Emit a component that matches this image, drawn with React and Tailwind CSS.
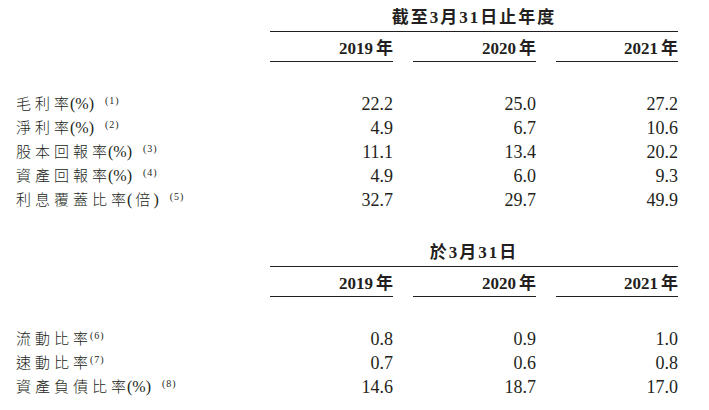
import React from "react";

const sectionOne = [
  { label: "毛利率", unit: "(%)", note: "(1)", values: ["22.2", "25.0", "27.2"] },
  { label: "淨利率", unit: "(%)", note: "(2)", values: ["4.9", "6.7", "10.6"] },
  { label: "股本回報率", unit: "(%)", note: "(3)", values: ["11.1", "13.4", "20.2"] },
  { label: "資產回報率", unit: "(%)", note: "(4)", values: ["4.9", "6.0", "9.3"] },
  { label: "利息覆蓋比率", unit: "(倍)", note: "(5)", values: ["32.7", "29.7", "49.9"] },
];

const sectionTwo = [
  { label: "流動比率", unit: "", note: "(6)", values: ["0.8", "0.9", "1.0"] },
  { label: "速動比率", unit: "", note: "(7)", values: ["0.7", "0.6", "0.8"] },
  { label: "資產負債比率", unit: "(%)", note: "(8)", values: ["14.6", "18.7", "17.0"] },
];

const years = ["2019", "2020", "2021"];

function Section({ title, rows, gap }) {
  return (
    <div className="grid grid-cols-[234px_123px_123px_122px] gap-x-5">
      {/* Title over the three year columns */}
      <div className="col-start-2 col-span-3 h-[32px] pt-[8px] text-center text-[17px] leading-[20px] font-bold tracking-[2px] border-b border-[#231f20]">
        {title}
      </div>

      {/* Year headings */}
      <div />
      {years.map((y) => (
        <div
          key={y}
          className="h-[30px] pt-[5px] text-right text-[17px] leading-[24px] font-bold border-b border-[#231f20]"
        >
          {y}
          <span className="ml-[3px]">年</span>
        </div>
      ))}

      {/* Data rows */}
      {rows.map((r, i) => (
        <React.Fragment key={r.label}>
          <div className={`${i === 0 ? gap : ""} h-[24px] leading-[24px] flex items-center whitespace-nowrap`}>
            <span className="text-[15px] font-light">
              <span className="tracking-[4px]">{r.label.slice(0, -1)}</span>
              {r.label.slice(-1)}
            </span>
            {r.unit && (
              <span className="ml-[1px] text-[16px]">
                {r.unit === "(倍)" ? (
                  <>
                    (<span className="text-[15px] font-light mx-[3px]">倍</span>)
                  </>
                ) : (
                  r.unit
                )}
              </span>
            )}
            <span className={`${r.unit ? "ml-[11px]" : "ml-[2px]"} text-[10px] tracking-[1px] -translate-y-[3px]`}>
              {r.note}
            </span>
          </div>
          {r.values.map((v, j) => (
            <div key={j} className={`${i === 0 ? gap : ""} h-[24px] leading-[24px] text-right text-[18px]`}>
              {v}
            </div>
          ))}
        </React.Fragment>
      ))}
    </div>
  );
}

export default function App() {
  return (
    <div className="w-[709px] h-[410px] bg-white pl-4 text-[#231f20] font-[family-name:Liberation_Serif,Noto_Sans_CJK_TC,serif]">
      <Section title="截至3月31日止年度" rows={sectionOne} gap="mt-[30px]" />
      <div className="mt-[23px]">
        <Section title="於3月31日" rows={sectionTwo} gap="mt-[30px]" />
      </div>
    </div>
  );
}
